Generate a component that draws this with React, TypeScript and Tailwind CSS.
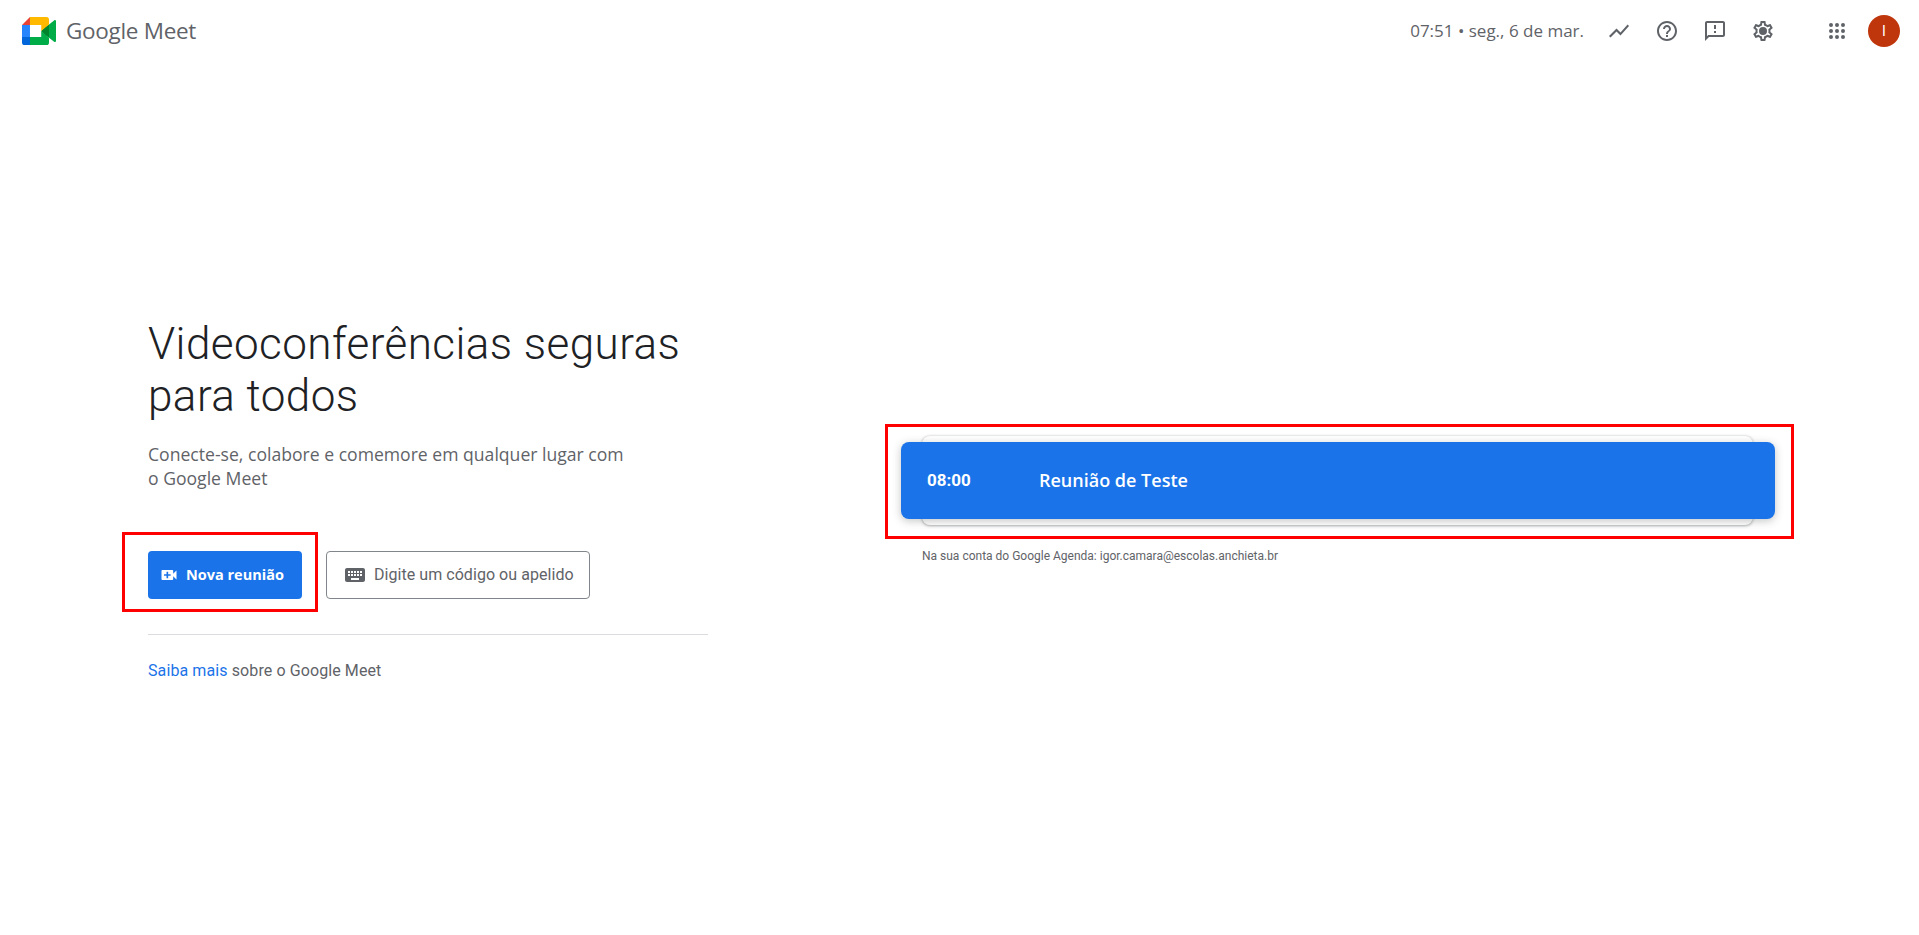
const GoogleLogo = () => (
  <svg viewBox="0 0 87.5 72" className="h-[28px] w-[34px]">
    <path fill="#00832d" d="M49.5 36l8.53 9.75 11.47 7.33 2-17.02-2-16.64-11.69 6.44z" />
    <path fill="#0066da" d="M0 51.5V66c0 3.315 2.685 6 6 6h14.5l3-10.96-3-9.54-9.95-3z" />
    <path fill="#e94235" d="M20.5 0L0 20.5l10.55 3 9.95-3 2.95-9.41z" />
    <path fill="#2684fc" d="M20.5 20.5H0v31h20.5z" />
    <path fill="#00ac47" d="M82.6 8.68L69.5 19.42v33.66l13.16 10.79c1.97 1.54 4.85.13 4.85-2.37V11c0-2.53-2.95-3.92-4.91-2.32zM49.5 36v15.5h-29V72h43c3.315 0 6-2.685 6-6V53.08z" />
    <path fill="#ffba00" d="M63.5 0h-43v20.5h29V36l20-16.57V6c0-3.315-2.685-6-6-6z" />
  </svg>
);

const Icon = ({ d, className = 'w-6 h-6' }: { d: string; className?: string }) => (
  <svg viewBox="0 0 24 24" fill="currentColor" className={className}>
    <path d={d} />
  </svg>
);

const icons = {
  chart: 'M3.5 18.49l6-6.01 4 4L22 6.92l-1.41-1.41-7.09 7.97-4-4L2 16.99z',
  help: 'M11 18h2v-2h-2v2zm1-16C6.48 2 2 6.48 2 12s4.48 10 10 10 10-4.48 10-10S17.52 2 12 2zm0 18c-4.41 0-8-3.59-8-8s3.59-8 8-8 8 3.59 8 8-3.59 8-8 8zm0-14c-2.21 0-4 1.79-4 4h2c0-1.1.9-2 2-2s2 .9 2 2c0 2-3 1.75-3 5h2c0-2.25 3-2.5 3-5 0-2.21-1.79-4-4-4z',
  feedback: 'M20 2H4c-1.1 0-2 .9-2 2v18l4-4h14c1.1 0 2-.9 2-2V4c0-1.1-.9-2-2-2zm0 14H5.17L4 17.17V4h16v12zM11 12h2v2h-2zm0-6h2v4h-2z',
  settings: 'M19.43 12.98c.04-.32.07-.64.07-.98 0-.34-.03-.66-.07-.98l2.11-1.65c.19-.15.24-.42.12-.64l-2-3.46c-.09-.16-.26-.25-.44-.25-.06 0-.12.01-.17.03l-2.49 1c-.52-.4-1.08-.73-1.69-.98l-.38-2.65C14.46 2.18 14.25 2 14 2h-4c-.25 0-.46.18-.49.42l-.38 2.65c-.61.25-1.17.59-1.69.98l-2.49-1c-.06-.02-.12-.03-.18-.03-.17 0-.34.09-.43.25l-2 3.46c-.13.22-.07.49.12.64l2.11 1.65c-.04.32-.07.65-.07.98 0 .33.03.66.07.98l-2.11 1.65c-.19.15-.24.42-.12.64l2 3.46c.09.16.26.25.44.25.06 0 .12-.01.17-.03l2.49-1c.52.4 1.08.73 1.69.98l.38 2.65c.03.24.24.42.49.42h4c.25 0 .46-.18.49-.42l.38-2.65c.61-.25 1.17-.59 1.69-.98l2.49 1c.06.02.12.03.18.03.17 0 .34-.09.43-.25l2-3.46c.12-.22.07-.49-.12-.64l-2.11-1.65zm-1.98-1.71c.04.31.05.52.05.73 0 .21-.02.43-.05.73l-.14 1.13.89.7 1.08.84-.7 1.21-1.27-.51-1.04-.42-.9.68c-.43.32-.84.56-1.25.73l-1.06.43-.16 1.13-.2 1.35h-1.4l-.19-1.35-.16-1.13-1.06-.43c-.43-.18-.83-.41-1.23-.71l-.91-.7-1.06.43-1.27.51-.7-1.21 1.08-.84.89-.7-.14-1.13c-.03-.31-.05-.54-.05-.74s.02-.43.05-.73l.14-1.13-.89-.7-1.08-.84.7-1.21 1.27.51 1.04.42.9-.68c.43-.32.84-.56 1.25-.73l1.06-.43.16-1.13.2-1.35h1.39l.19 1.35.16 1.13 1.06.43c.43.18.83.41 1.23.71l.91.7 1.06-.43 1.27-.51.7 1.21-1.07.85-.89.7.14 1.13zM12 8a4 4 0 1 0 0 8 4 4 0 0 0 0-8z',
  video: 'M17 10.5V7c0-.55-.45-1-1-1H4c-.55 0-1 .45-1 1v10c0 .55.45 1 1 1h12c.55 0 1-.45 1-1v-3.5l4 4v-11l-4 4zM14 13h-3v3H9v-3H6v-2h3V8h2v3h3v2z',
  keyboard: 'M20 5H4c-1.1 0-1.99.9-1.99 2L2 17c0 1.1.9 2 2 2h16c1.1 0 2-.9 2-2V7c0-1.1-.9-2-2-2zm-9 3h2v2h-2V8zm0 3h2v2h-2v-2zM8 8h2v2H8V8zm0 3h2v2H8v-2zm-1 2H5v-2h2v2zm0-3H5V8h2v2zm9 7H8v-2h8v2zm0-4h-2v-2h2v2zm0-3h-2V8h2v2zm3 3h-2v-2h2v2zm0-3h-2V8h2v2z',
  apps: 'M6 8a2 2 0 1 0 0-4 2 2 0 0 0 0 4zm6 0a2 2 0 1 0 0-4 2 2 0 0 0 0 4zm6 0a2 2 0 1 0 0-4 2 2 0 0 0 0 4zM6 14a2 2 0 1 0 0-4 2 2 0 0 0 0 4zm6 0a2 2 0 1 0 0-4 2 2 0 0 0 0 4zm6 0a2 2 0 1 0 0-4 2 2 0 0 0 0 4zM6 20a2 2 0 1 0 0-4 2 2 0 0 0 0 4zm6 0a2 2 0 1 0 0-4 2 2 0 0 0 0 4zm6 0a2 2 0 1 0 0-4 2 2 0 0 0 0 4z',
};

export default function App() {
  return (
    <div className="min-h-[935px] bg-white font-['Roboto',sans-serif] text-[#5f6368] flex flex-col">
      <header className="h-16 flex items-center pl-[22px] pr-[19px] -mt-[1px]">
        <GoogleLogo />
        <span className="ml-[10px] text-[22.5px] tracking-[-0.3px] font-['Open_Sans',sans-serif] text-[#5f6368]">
          Google Meet
        </span>
        <div className="ml-auto flex items-center">
          <span className="text-[17px] font-['Open_Sans',sans-serif] mr-[11px]">07:51 • seg., 6 de mar.</span>
          {[icons.chart, icons.help, icons.feedback, icons.settings].map((d) => (
            <button key={d} className="w-12 h-12 flex items-center justify-center">
              <Icon d={d} />
            </button>
          ))}
          <button className="w-12 h-12 ml-[26px] flex items-center justify-center">
            <Icon d={icons.apps} />
          </button>
          <div className="w-8 h-8 ml-[7px] rounded-full bg-[#bf360c] text-white text-[14px] flex items-center justify-center">
            I
          </div>
        </div>
      </header>

      <main className="flex-1 flex items-center pl-[148px]">
        <div className="w-[560px] pt-[2px]">
          <h1 className="text-[44px] leading-[52px] text-[#202124] font-[350] tracking-[0.44px]">
            Videoconferências seguras
            <br />
            para todos
          </h1>
          <p className="mt-[20px] text-[17.6px] leading-6 font-['Open_Sans',sans-serif]">
            Conecte-se, colabore e comemore em qualquer lugar com
            <br />o Google Meet
          </p>
          <div className="mt-[61px] flex gap-6">
            <div className="relative">
              <button className="h-12 w-[154px] rounded bg-[#1a73e8] text-white flex items-center pl-[11px] gap-[7px] text-[14.5px] font-bold font-['Open_Sans',sans-serif]">
                <Icon d={icons.video} className="w-5 h-5" />
                Nova reunião
              </button>
              <div className="absolute -left-[26px] -right-[16px] -top-[19px] -bottom-[13px] border-[3px] border-[#ff0000]" />
            </div>
            <button className="h-12 w-[264px] rounded border border-[#80868b] flex items-center pl-[16px] gap-[7px] text-[16px] tracking-[0.05px]">
              <Icon d={icons.keyboard} />
              Digite um código ou apelido
            </button>
          </div>
          <div className="mt-[35px] h-px bg-[#dadce0]" />
          <p className="mt-[24px] text-[16px] leading-6 tracking-[0.1px]">
            <a className="text-[#1a73e8]">Saiba mais</a> sobre o Google Meet
          </p>
        </div>

        <div className="ml-[177px] w-[909px] -mt-[10px]">
          <div className="relative h-[115px] border-[3px] border-[#ff0000] pl-[13px] pr-[16px] pt-[15px]">
            <div className="absolute left-[34px] right-[38px] top-[9px] bottom-[11px] rounded-lg bg-white shadow-[0_1px_3px_rgba(60,64,67,0.35),0_0_3px_rgba(60,64,67,0.18)]" />
            <div className="relative h-[77px] rounded-lg bg-[#1a73e8] text-white flex items-center shadow-[0_2px_8px_rgba(60,64,67,0.3)]">
              <span className="ml-[26px] w-[112px] pt-px text-[17px] font-bold">08:00</span>
              <span className="text-[18px] font-semibold font-['Open_Sans',sans-serif]">Reunião de Teste</span>
            </div>
          </div>
          <p className="mt-[9px] ml-[37px] text-[12px] leading-4">
            Na sua conta do Google Agenda: igor.camara@escolas.anchieta.br
          </p>
        </div>
      </main>
    </div>
  );
}
